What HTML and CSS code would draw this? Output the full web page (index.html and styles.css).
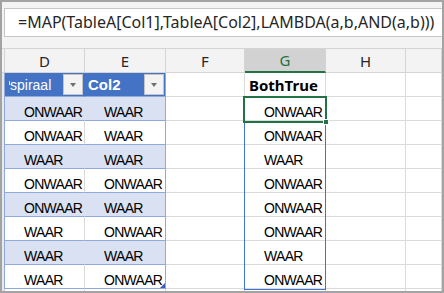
FILE: index.html
```html
<!DOCTYPE html>
<html>
<head>
<meta charset="utf-8">
<link rel="stylesheet" href="styles.css">
</head>
<body>
<div class="frame">
  <div class="fbar">
    <div class="fbox">=MAP(TableA[Col1],TableA[Col2],LAMBDA(a,b,AND(a,b)))</div>
  </div>
  <div class="sheet">
    <div class="row hdr">
      <div class="c stub"></div>
      <div class="c col">D</div>
      <div class="c col">E</div>
      <div class="c col">F</div>
      <div class="c col sel">G</div>
      <div class="c col">H</div>
      <div class="c col"></div>
    </div>
    <div class="row">
      <div class="c stub tb"></div>
      <div class="c th d"><span class="tick"></span>spiraal<span class="dd"></span></div>
      <div class="c th e"><b>Col2</b><span class="dd"></span></div>
      <div class="c"></div>
      <div class="c bold">BothTrue</div>
      <div class="c"></div>
      <div class="c"></div>
    </div>
    <div class="row">
      <div class="c stub tb"></div>
      <div class="c v d band">ONWAAR</div>
      <div class="c v e band">WAAR</div>
      <div class="c"></div>
      <div class="c v">ONWAAR</div>
      <div class="c"></div>
      <div class="c"></div>
    </div>
    <div class="row">
      <div class="c stub tb"></div>
      <div class="c v d">ONWAAR</div>
      <div class="c v e">WAAR</div>
      <div class="c"></div>
      <div class="c v">ONWAAR</div>
      <div class="c"></div>
      <div class="c"></div>
    </div>
    <div class="row">
      <div class="c stub tb"></div>
      <div class="c v d band">WAAR</div>
      <div class="c v e band">WAAR</div>
      <div class="c"></div>
      <div class="c v">WAAR</div>
      <div class="c"></div>
      <div class="c"></div>
    </div>
    <div class="row">
      <div class="c stub tb"></div>
      <div class="c v d">ONWAAR</div>
      <div class="c v e">ONWAAR</div>
      <div class="c"></div>
      <div class="c v">ONWAAR</div>
      <div class="c"></div>
      <div class="c"></div>
    </div>
    <div class="row">
      <div class="c stub tb"></div>
      <div class="c v d band">ONWAAR</div>
      <div class="c v e band">WAAR</div>
      <div class="c"></div>
      <div class="c v">ONWAAR</div>
      <div class="c"></div>
      <div class="c"></div>
    </div>
    <div class="row">
      <div class="c stub tb"></div>
      <div class="c v d">WAAR</div>
      <div class="c v e">ONWAAR</div>
      <div class="c"></div>
      <div class="c v">ONWAAR</div>
      <div class="c"></div>
      <div class="c"></div>
    </div>
    <div class="row">
      <div class="c stub tb"></div>
      <div class="c v d band">WAAR</div>
      <div class="c v e band">WAAR</div>
      <div class="c"></div>
      <div class="c v">WAAR</div>
      <div class="c"></div>
      <div class="c"></div>
    </div>
    <div class="row">
      <div class="c stub tb"></div>
      <div class="c v d">WAAR</div>
      <div class="c v e">ONWAAR<span class="resize"></span></div>
      <div class="c"></div>
      <div class="c v">ONWAAR</div>
      <div class="c"></div>
      <div class="c"></div>
    </div>
    <div class="row tail">
      <div class="c stub"></div>
      <div class="c"></div>
      <div class="c"></div>
      <div class="c"></div>
      <div class="c"></div>
      <div class="c"></div>
      <div class="c"></div>
    </div>
    <div class="spill"></div>
    <div class="active"><span class="handle"></span></div>
  </div>
</div>
</body>
</html>
```
FILE: styles.css
```css
html, body {
  margin: 0;
  padding: 0;
  background: #fff;
}
.frame {
  width: 444px;
  height: 293px;
  box-sizing: border-box;
  border: 2px solid #a3a3a3;
  background: #f3f3f3;
  display: flex;
  flex-direction: column;
  overflow: hidden;
}
.fbar {
  height: 46px;
  box-sizing: border-box;
  padding: 6px 0 0 2px;
  flex: none;
}
.fbox {
  height: 29px;
  box-sizing: border-box;
  border: 1px solid #c6c6c6;
  border-right: none;
  background: #fff;
  padding-left: 13px;
  font-family: "Noto Sans", sans-serif;
  font-size: 16px;
  line-height: 26px;
  color: #262626;
  white-space: nowrap;
}
.sheet {
  position: relative;
  flex: 1;
  border-top: 1px solid #d4d4d4;
  background: #fff;
}
.row {
  display: grid;
  grid-template-columns: 3px 80px 81px 79px 81px 80px 1fr;
  height: 24px;
}
.row.tail {
  height: 10px;
}
.c {
  box-sizing: border-box;
  border-right: 1px solid #dadada;
  border-bottom: 1px solid #dadada;
  position: relative;
  font-family: "Liberation Sans", Arial, sans-serif;
  font-size: 14px;
  letter-spacing: -0.7px;
  color: #000;
  display: flex;
  align-items: flex-end;
  line-height: 16px;
  white-space: nowrap;
}
.stub {
  background: #e9e9e9;
  border-right-color: #c8c8c8;
  border-bottom: none;
}
.stub.tb {
  border-right-color: #8ea9db;
}
.hdr .c {
  background: #f3f3f3;
  border-right-color: #d4d4d4;
  border-bottom-color: #d4d4d4;
  font-family: "Noto Sans", sans-serif;
  font-size: 15px;
  letter-spacing: 0;
  color: #262626;
  justify-content: center;
  align-items: center;
  line-height: 22px;
}
.hdr .stub {
  border-bottom: 1px solid #d4d4d4;
}
.hdr .sel {
  background: #d2d2d2;
  color: #217346;
  border-bottom: 2px solid #217346;
}
.v {
  padding-left: 19px;
}
.d, .e {
  border-bottom-color: #8ea9db;
}
.e {
  border-right-color: #8ea9db;
}
.band {
  background: #d9e1f2;
}
.d.band {
  border-right-color: #d9e1f2;
}
.th {
  background: #4472c4;
  color: #fff;
  border-right-color: #4472c4;
  padding-left: 5px;
  align-items: center;
  letter-spacing: 0;
}
.th.e {
  border-right-color: #8ea9db;
  padding-left: 3px;
}
.th b {
  font-size: 15px;
}
.tick {
  position: absolute;
  left: 4px;
  top: 8px;
  width: 1px;
  height: 4px;
  background: #dfe6f5;
}
.dd {
  position: absolute;
  right: 1px;
  top: 1px;
  width: 20px;
  height: 21px;
  box-sizing: border-box;
  background: #f3f3f3;
  border: 1px solid #c4c4c4;
}
.dd::after {
  content: "";
  position: absolute;
  left: 6px;
  top: 8px;
  border-left: 3.5px solid transparent;
  border-right: 3.5px solid transparent;
  border-top: 4px solid #6f6f6f;
}
.bold {
  font-family: "Noto Sans", sans-serif;
  font-weight: 700;
  font-size: 15px;
  letter-spacing: 0;
  padding-left: 4px;
  align-items: center;
}
.resize {
  position: absolute;
  right: 0;
  bottom: 0;
  width: 5px;
  height: 5px;
  background: #3b5bb5;
  clip-path: polygon(100% 0, 100% 100%, 0 100%);
}
.spill {
  position: absolute;
  left: 242px;
  top: 48px;
  width: 82px;
  height: 193px;
  box-sizing: border-box;
  border: 1px solid #3b74d4;
}
.active {
  position: absolute;
  left: 241px;
  top: 47px;
  width: 84px;
  height: 27px;
  box-sizing: border-box;
  border: 2px solid #217346;
}
.handle {
  position: absolute;
  right: -4px;
  bottom: -4px;
  width: 6px;
  height: 6px;
  box-sizing: border-box;
  background: #217346;
  border: 1px solid #fff;
}
```
